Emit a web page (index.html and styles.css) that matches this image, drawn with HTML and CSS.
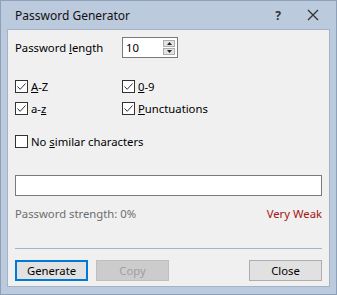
FILE: index.html
```html
<!DOCTYPE html>
<html lang="en">
<head>
    <meta charset="UTF-8">
    <title>Password Generator</title>
    <link rel="stylesheet" href="styles.css">
</head>
<body>
    <div class="window">
        <div class="titlebar">
            <span class="title">Password Generator</span>
            <span class="help">?</span>
            <svg class="close-x" width="12" height="12" viewBox="0 0 12 12">
                <path d="M1 1 L11 11 M11 1 L1 11" stroke="#333" stroke-width="1.3" fill="none"/>
            </svg>
        </div>

        <div class="client">
            <!-- Length -->
            <div class="length-row">
                <span class="label">Password <u>l</u>ength</span>
                <div class="spinner">
                    <span class="spin-value">10</span>
                    <div class="spin-buttons">
                        <div class="spin-btn"><svg width="7" height="4" viewBox="0 0 7 4"><path d="M0 4 L3.5 0 L7 4 Z" fill="#222"/></svg></div>
                        <div class="spin-btn"><svg width="7" height="4" viewBox="0 0 7 4"><path d="M0 0 L3.5 4 L7 0 Z" fill="#222"/></svg></div>
                    </div>
                </div>
            </div>

            <!-- Character sets -->
            <div class="options">
                <label class="check"><span class="box"><svg width="11" height="11" viewBox="0 0 11 11"><path d="M1.5 5.5 L4.2 8.3 L9.5 2.5" stroke="#333" stroke-width="1" fill="none"/></svg></span><span><u>A</u>-Z</span></label>
                <label class="check"><span class="box"><svg width="11" height="11" viewBox="0 0 11 11"><path d="M1.5 5.5 L4.2 8.3 L9.5 2.5" stroke="#333" stroke-width="1" fill="none"/></svg></span><span><u>0</u>-9</span></label>
                <label class="check"><span class="box"><svg width="11" height="11" viewBox="0 0 11 11"><path d="M1.5 5.5 L4.2 8.3 L9.5 2.5" stroke="#333" stroke-width="1" fill="none"/></svg></span><span>a-<u>z</u></span></label>
                <label class="check"><span class="box"><svg width="11" height="11" viewBox="0 0 11 11"><path d="M1.5 5.5 L4.2 8.3 L9.5 2.5" stroke="#333" stroke-width="1" fill="none"/></svg></span><span><u>P</u>unctuations</span></label>
            </div>

            <label class="check similar"><span class="box"></span><span>No <u>s</u>imilar characters</span></label>

            <div class="output"></div>

            <div class="strength">
                <span class="strength-label">Password strength: 0%</span>
                <span class="strength-value">Very Weak</span>
            </div>

            <div class="separator"></div>

            <div class="buttons">
                <button class="btn default">Generate</button>
                <button class="btn" disabled>Copy</button>
                <span class="spacer"></span>
                <button class="btn">Close</button>
            </div>
        </div>
    </div>
</body>
</html>
```

FILE: styles.css
```css
body {
    margin: 0;
    font-family: "Noto Sans", "Open Sans", Arial, sans-serif;
    font-size: 11.3px;
    color: #000;
}
.window {
    width: 337px;
    height: 295px;
    box-sizing: border-box;
    background: #bccadd;
    border: 1px solid #8e9fb8;
    display: flex;
    flex-direction: column;
}
.titlebar {
    height: 28px;
    display: flex;
    align-items: center;
    padding: 0 0 0 14px;
}
.title {
    flex: 1;
    font-size: 12px;
    color: #111;
}
.help {
    font-weight: bold;
    font-size: 12px;
    color: #333;
    margin-right: 26px;
}
.close-x {
    margin-right: 17px;
}
.client {
    flex: 1;
    margin: 0 6px 7px 6px;
    background: #f0f0f0;
    border: 1px solid #a4b2c6;
    padding: 7px 7px 0 7px;
    display: flex;
    flex-direction: column;
}
.length-row {
    display: flex;
    align-items: center;
    height: 21px;
}
.label {
    width: 107px;
}
.spinner {
    width: 51px;
    height: 19px;
    background: #fff;
    border: 1px solid #7a7a7a;
    display: flex;
    align-items: center;
    padding-left: 3px;
}
.spin-value {
    flex: 1;
}
.spin-buttons {
    display: flex;
    flex-direction: column;
    gap: 1px;
    margin-right: 2px;
}
.spin-btn {
    width: 12px;
    height: 7px;
    background: #e3e3e3;
    border: 1px solid #adadad;
    box-sizing: border-box;
    display: flex;
    align-items: center;
    justify-content: center;
}
.spin-btn svg {
    width: 5px;
    height: 3px;
}
.options {
    display: grid;
    grid-template-columns: 107px 1fr;
    row-gap: 9px;
    margin-top: 22px;
}
.check {
    display: flex;
    align-items: center;
    height: 13px;
    gap: 3px;
}
.box {
    width: 13px;
    height: 13px;
    box-sizing: border-box;
    background: #fff;
    border: 1px solid #333;
    display: flex;
    align-items: center;
    justify-content: center;
}
.similar {
    margin-top: 20px;
}
.output {
    height: 21px;
    box-sizing: border-box;
    background: #fff;
    border: 1px solid #7a7a7a;
    margin-top: 27px;
}
.strength {
    display: flex;
    justify-content: space-between;
    margin-top: 10px;
    line-height: 15px;
}
.strength-label {
    color: #6d6d6d;
}
.strength-value {
    color: #a31515;
}
.separator {
    height: 1px;
    background: #a2b3cb;
    margin-top: 27px;
}
.buttons {
    display: flex;
    margin-top: 11px;
    gap: 8px;
}
.spacer {
    flex: 1;
}
.btn {
    width: 73px;
    height: 21px;
    font-family: inherit;
    font-size: 11.3px;
    background: #e1e1e1;
    border: 1px solid #adadad;
    padding: 0;
    color: #000;
}
.btn.default {
    border: 2px solid #0078d7;
}
.btn:disabled {
    background: #cccccc;
    border-color: #bfbfbf;
    color: #9f9f9f;
}
```
